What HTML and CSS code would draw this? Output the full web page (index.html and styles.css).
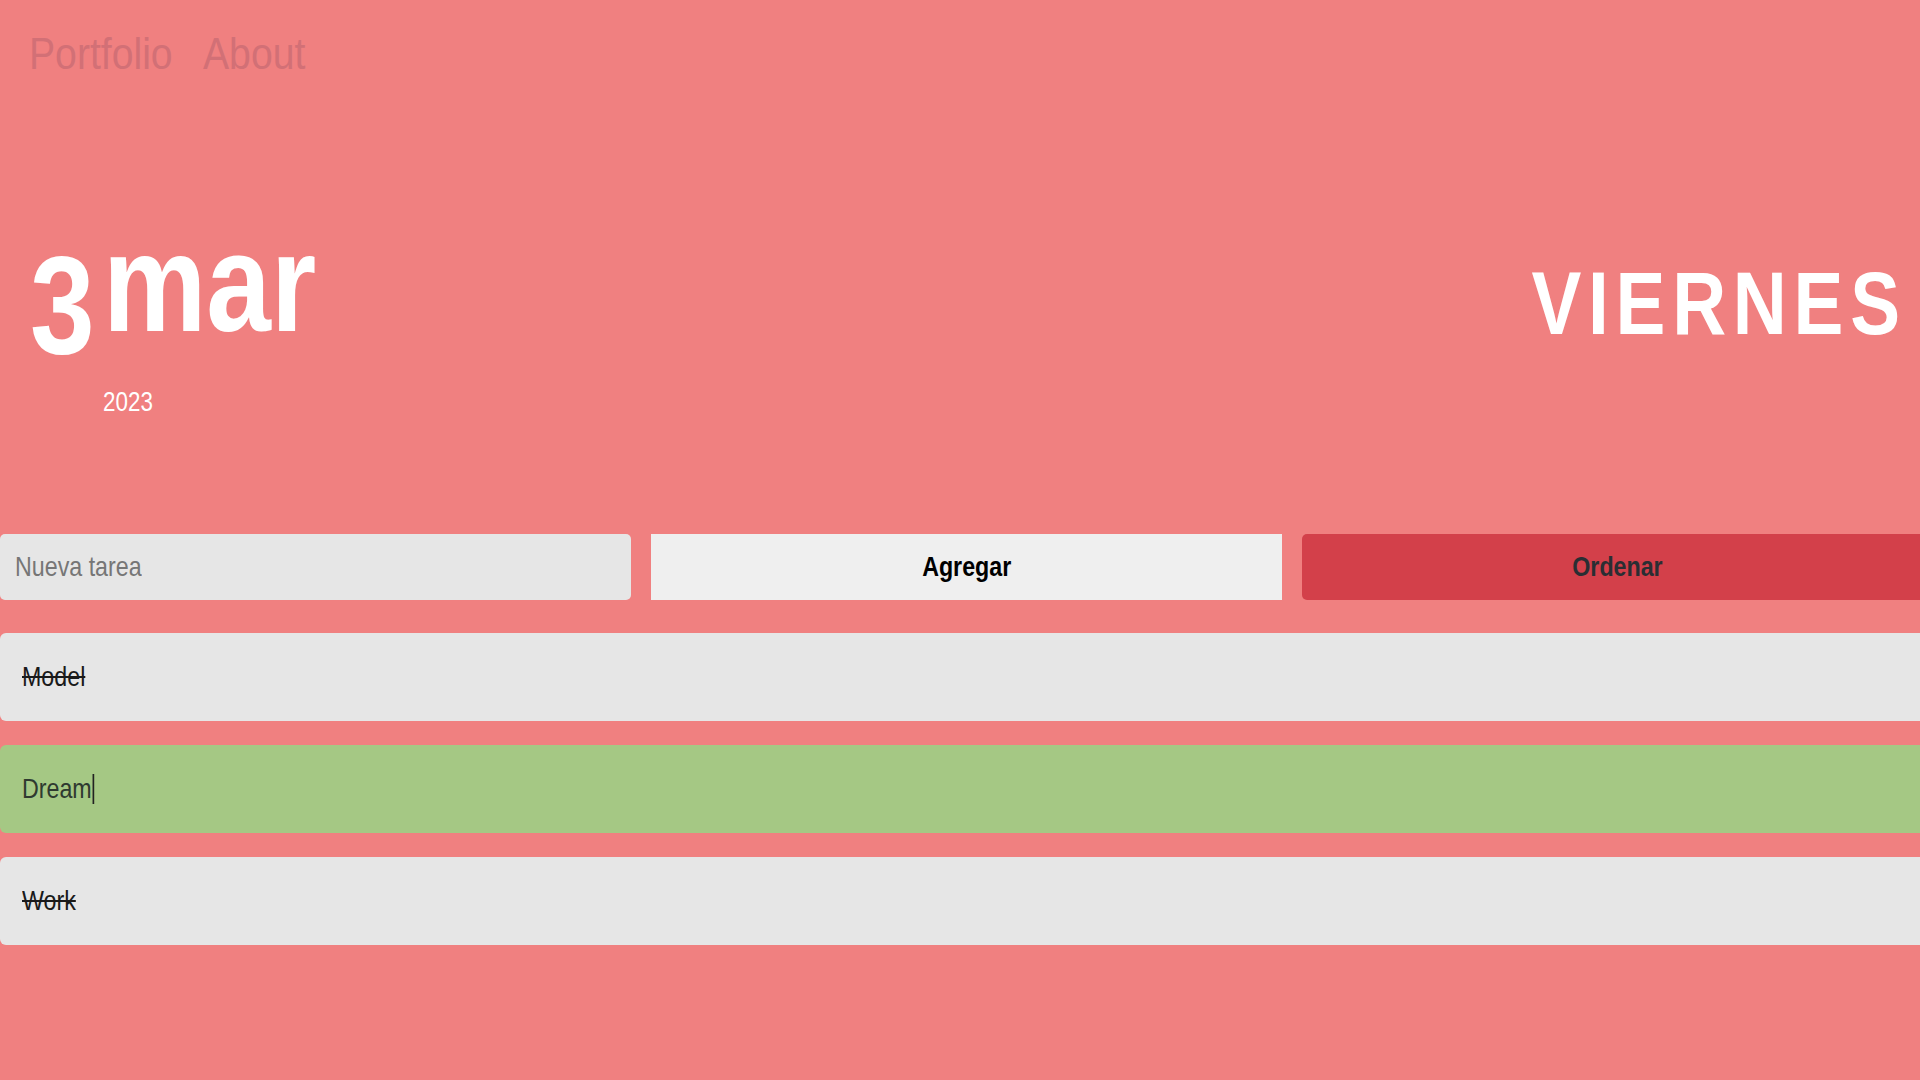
FILE: index.html
```html
<!DOCTYPE html>
<html lang="es">
<head>
<meta charset="utf-8">
<title>Tareas</title>
<link rel="stylesheet" href="styles.css">
</head>
<body>
<nav class="nav">
  <a class="nav-link" href="#">Portfolio</a>
  <a class="nav-link" href="#">About</a>
</nav>
<header class="date-row">
  <div class="date">
    <div class="day"><span class="sq">3</span></div>
    <div class="month-col">
      <div class="month"><span class="sq">mar</span></div>
      <div class="year"><span class="sq">2023</span></div>
    </div>
  </div>
  <div class="weekday"><span class="sq sq-right">VIERNES</span></div>
</header>
<section class="controls">
  <div class="new-task"><span class="sq placeholder">Nueva tarea</span></div>
  <button class="btn btn-add"><span class="sq sq-center">Agregar</span></button>
  <button class="btn btn-sort"><span class="sq sq-center">Ordenar</span></button>
</section>
<section class="tasks">
  <div class="task done"><span class="sq">Model</span></div>
  <div class="task active"><span class="sq">Dream<span class="caret"></span></span></div>
  <div class="task done"><span class="sq">Work</span></div>
</section>
</body>
</html>
```
FILE: styles.css
```css
html, body {
  margin: 0;
  padding: 0;
}
body {
  background: #f08080;
  font-family: "Liberation Sans", Arial, sans-serif;
  overflow: hidden;
  width: 1920px;
  height: 1080px;
}
.sq {
  display: inline-block;
  transform: scaleX(0.83);
  transform-origin: left center;
  white-space: nowrap;
}
.sq-right {
  transform-origin: right center;
}
.sq-center {
  transform-origin: center center;
}
.nav {
  display: flex;
  gap: 9px;
  padding: 31px 0 0 29px;
}
.nav-link {
  display: inline-block;
  font-size: 45px;
  line-height: 1;
  color: #d27076;
  text-decoration: none;
  transform: scaleX(0.87);
  transform-origin: left center;
}
.date-row {
  display: flex;
  justify-content: space-between;
  align-items: flex-start;
  margin-top: 137px;
  padding: 0 13px 0 30px;
}
.date {
  display: flex;
  gap: 3px;
}
.day, .month {
  font-size: 140px;
  line-height: 1;
  font-weight: bold;
  color: #fff;
}
.day {
  width: 70px;
  margin-top: 22px;
}
.month-col {
  display: flex;
  flex-direction: column;
}
.year {
  margin-top: 36px;
  font-size: 27px;
  line-height: 1;
  color: #fff;
}
.weekday {
  margin-top: 46px;
  font-size: 89px;
  line-height: 1;
  font-weight: bold;
  color: #fff;
  letter-spacing: 8px;
}
.weekday .sq {
  transform: scaleX(0.84);
}
.controls {
  display: grid;
  grid-template-columns: repeat(3, 631px);
  gap: 20px;
  margin-top: 118px;
  height: 66px;
  width: 1933px;
}
.new-task {
  display: flex;
  align-items: center;
  border-radius: 5px;
  background: #e6e6e6;
  padding: 0 15px;
  font-size: 28px;
}
.placeholder {
  color: #767676;
}
.btn {
  border: none;
  padding: 0;
  font-family: inherit;
  font-size: 28px;
  font-weight: bold;
  cursor: pointer;
}
.btn-add {
  background: #efefef;
  color: #000;
  border-radius: 0;
}
.btn-sort {
  background: #d3404a;
  color: #2a2e33;
  border-radius: 5px;
}
.tasks {
  display: flex;
  flex-direction: column;
  gap: 24px;
  margin-top: 33px;
  width: 1960px;
}
.task {
  height: 88px;
  display: flex;
  align-items: center;
  padding: 0 22px;
  border-radius: 6px;
  background: #e6e6e6;
  font-size: 28px;
  color: #222;
}
.task.done {
  text-decoration: line-through;
  color: #1a1a1a;
}
.task.active {
  background: #a5c884;
  color: #2f3a30;
}
.caret {
  display: inline-block;
  width: 0;
  height: 30px;
  vertical-align: -6px;
  border-left: 2px solid #222;
  margin-left: 1px;
}
```
